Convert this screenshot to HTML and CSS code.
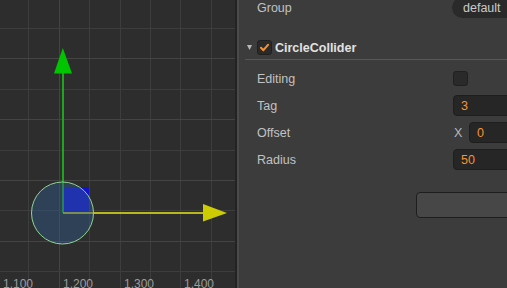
FILE: index.html
```html
<!DOCTYPE html>
<html lang="en">
  <head>
    <meta charset="UTF-8" />
    <meta name="viewport" content="width=device-width, initial-scale=1.0" />
    <title>CircleCollider Inspector</title>
    <link rel="stylesheet" href="styles.css">
  </head>
  <body>
    <div class="editor">
      <div class="scene">
        <svg class="scene-canvas" width="235" height="288" viewBox="0 0 235 288">
          <rect width="235" height="288" fill="#2d2d2d" />
          <g stroke="#3d3d3d" stroke-width="1">
            <line x1="28.5" y1="0" x2="28.5" y2="288" />
            <line x1="59.5" y1="0" x2="59.5" y2="288" stroke="#444" />
            <line x1="89.5" y1="0" x2="89.5" y2="288" />
            <line x1="120.5" y1="0" x2="120.5" y2="288" />
            <line x1="150.5" y1="0" x2="150.5" y2="288" />
            <line x1="180.5" y1="0" x2="180.5" y2="288" />
            <line x1="211.5" y1="0" x2="211.5" y2="288" />
            <line x1="0" y1="28.5" x2="235" y2="28.5" />
            <line x1="0" y1="58.5" x2="235" y2="58.5" stroke="#444" />
            <line x1="0" y1="89.5" x2="235" y2="89.5" />
            <line x1="0" y1="119.5" x2="235" y2="119.5" stroke="#444" />
            <line x1="0" y1="150.5" x2="235" y2="150.5" />
            <line x1="0" y1="180.5" x2="235" y2="180.5" stroke="#444" />
            <line x1="0" y1="210.5" x2="235" y2="210.5" />
            <line x1="0" y1="241.5" x2="235" y2="241.5" stroke="#444" />
            <line x1="0" y1="271.5" x2="235" y2="271.5" />
          </g>

          <!-- gizmo -->
          <rect x="63" y="187" width="26" height="26" fill="#1212c8" />
          <line x1="63" y1="72" x2="63" y2="213" stroke="#1ea51e" stroke-width="2" />
          <polygon points="62.8,48 54,73.5 72,73.5" fill="#00c400" />
          <line x1="63" y1="213" x2="204" y2="213" stroke="#b8b81c" stroke-width="2" />
          <polygon points="203,204 227,213 203,221.5" fill="#cccc00" />
          <circle cx="62.5" cy="213" r="31" fill="rgba(50, 90, 140, 0.45)" stroke="#8fd48f" stroke-width="1" />

          <g class="ruler">
            <text x="3" y="288">1,100</text>
            <text x="63" y="288">1,200</text>
            <text x="124" y="288">1,300</text>
            <text x="184" y="288">1,400</text>
          </g>
        </svg>
      </div>

      <div class="divider"></div>

      <div class="panel">
        <div class="row row-first">
          <span class="label">Group</span>
          <span class="pill">default</span>
        </div>

        <div class="section-head">
          <svg class="fold" width="5" height="5" viewBox="0 0 5 5">
            <polygon points="0,0 5,0 2.5,5" fill="#b8b8b8" />
          </svg>
          <span class="checkbox checked">
            <svg width="11" height="11" viewBox="0 0 11 11">
              <path d="M2 5.8 L4.4 8.2 L9 2.8" fill="none" stroke="#f7922f" stroke-width="2" stroke-linecap="round" stroke-linejoin="round" />
            </svg>
          </span>
          <span class="section-title">CircleCollider</span>
        </div>

        <div class="props">
          <div class="row">
            <span class="label">Editing</span>
            <span class="checkbox"></span>
          </div>
          <div class="row">
            <span class="label">Tag</span>
            <span class="field">3</span>
          </div>
          <div class="row">
            <span class="label">Offset</span>
            <span class="vec">
              <span class="axis">X</span>
              <span class="field">0</span>
            </span>
          </div>
          <div class="row">
            <span class="label">Radius</span>
            <span class="field">50</span>
          </div>
        </div>

        <div class="actions">
          <button class="btn"></button>
        </div>
      </div>
    </div>
  </body>
</html>
```

FILE: styles.css
```css
* {
  margin: 0;
  padding: 0;
  box-sizing: border-box;
}

body {
  font-family: 'Liberation Sans', Arial, sans-serif;
  background: #3c3c3c;
  width: 507px;
  height: 288px;
  overflow: hidden;
}

.editor {
  display: flex;
  height: 288px;
}

.scene {
  width: 235px;
  flex-shrink: 0;
}

.scene-canvas {
  display: block;
}

.ruler text {
  font-family: 'Liberation Sans', Arial, sans-serif;
  font-size: 12px;
  fill: #9c9c9c;
}

.divider {
  width: 4px;
  flex-shrink: 0;
  border-left: 2px solid #232323;
  background: #4a4a4a;
}

.panel {
  flex: 1;
  overflow: hidden;
  background: #3c3c3c;
}

.row {
  display: flex;
  align-items: center;
  height: 27px;
  padding-left: 18px;
}

.row-first {
  margin-top: -6px;
}

.label {
  width: 196px;
  flex-shrink: 0;
  font-size: 12.5px;
  color: #c2c2c2;
}

.pill {
  display: flex;
  align-items: center;
  height: 21px;
  width: 90px;
  flex-shrink: 0;
  padding-left: 11px;
  margin-left: -1px;
  border-radius: 11px;
  background: #2a2a2a;
  font-size: 12.5px;
  color: #cacaca;
}

.section-head {
  display: flex;
  align-items: center;
  height: 26px;
  padding-top: 2px;
  margin-top: 13px;
  margin-left: 6px;
  border-bottom: 1px solid #575757;
}

.fold {
  margin-left: 2px;
  margin-right: 5px;
  flex-shrink: 0;
}

.checkbox {
  display: flex;
  align-items: center;
  justify-content: center;
  width: 15px;
  height: 15px;
  flex-shrink: 0;
  border-radius: 3px;
  background: #2a2a2a;
  border: 1px solid #202020;
}

.section-title {
  margin-left: 3px;
  font-size: 12.5px;
  font-weight: bold;
  color: #e2e2e2;
}

.props {
  padding-top: 5px;
}

.field {
  display: flex;
  align-items: center;
  height: 21px;
  width: 90px;
  flex-shrink: 0;
  padding-left: 7px;
  border-radius: 4px;
  background: #262626;
  border: 1px solid #1e1e1e;
  font-size: 12.5px;
  color: #f7922f;
}

.vec {
  display: flex;
  align-items: center;
  margin-left: 1px;
}

.axis {
  width: 15px;
  flex-shrink: 0;
  font-size: 12.5px;
  color: #b8b8b8;
}

.actions {
  padding-left: 177px;
  margin-top: 19px;
}

.btn {
  display: block;
  width: 120px;
  height: 26px;
  border-radius: 4px;
  background: #474747;
  border: 1px solid #1e1e1e;
}
```
